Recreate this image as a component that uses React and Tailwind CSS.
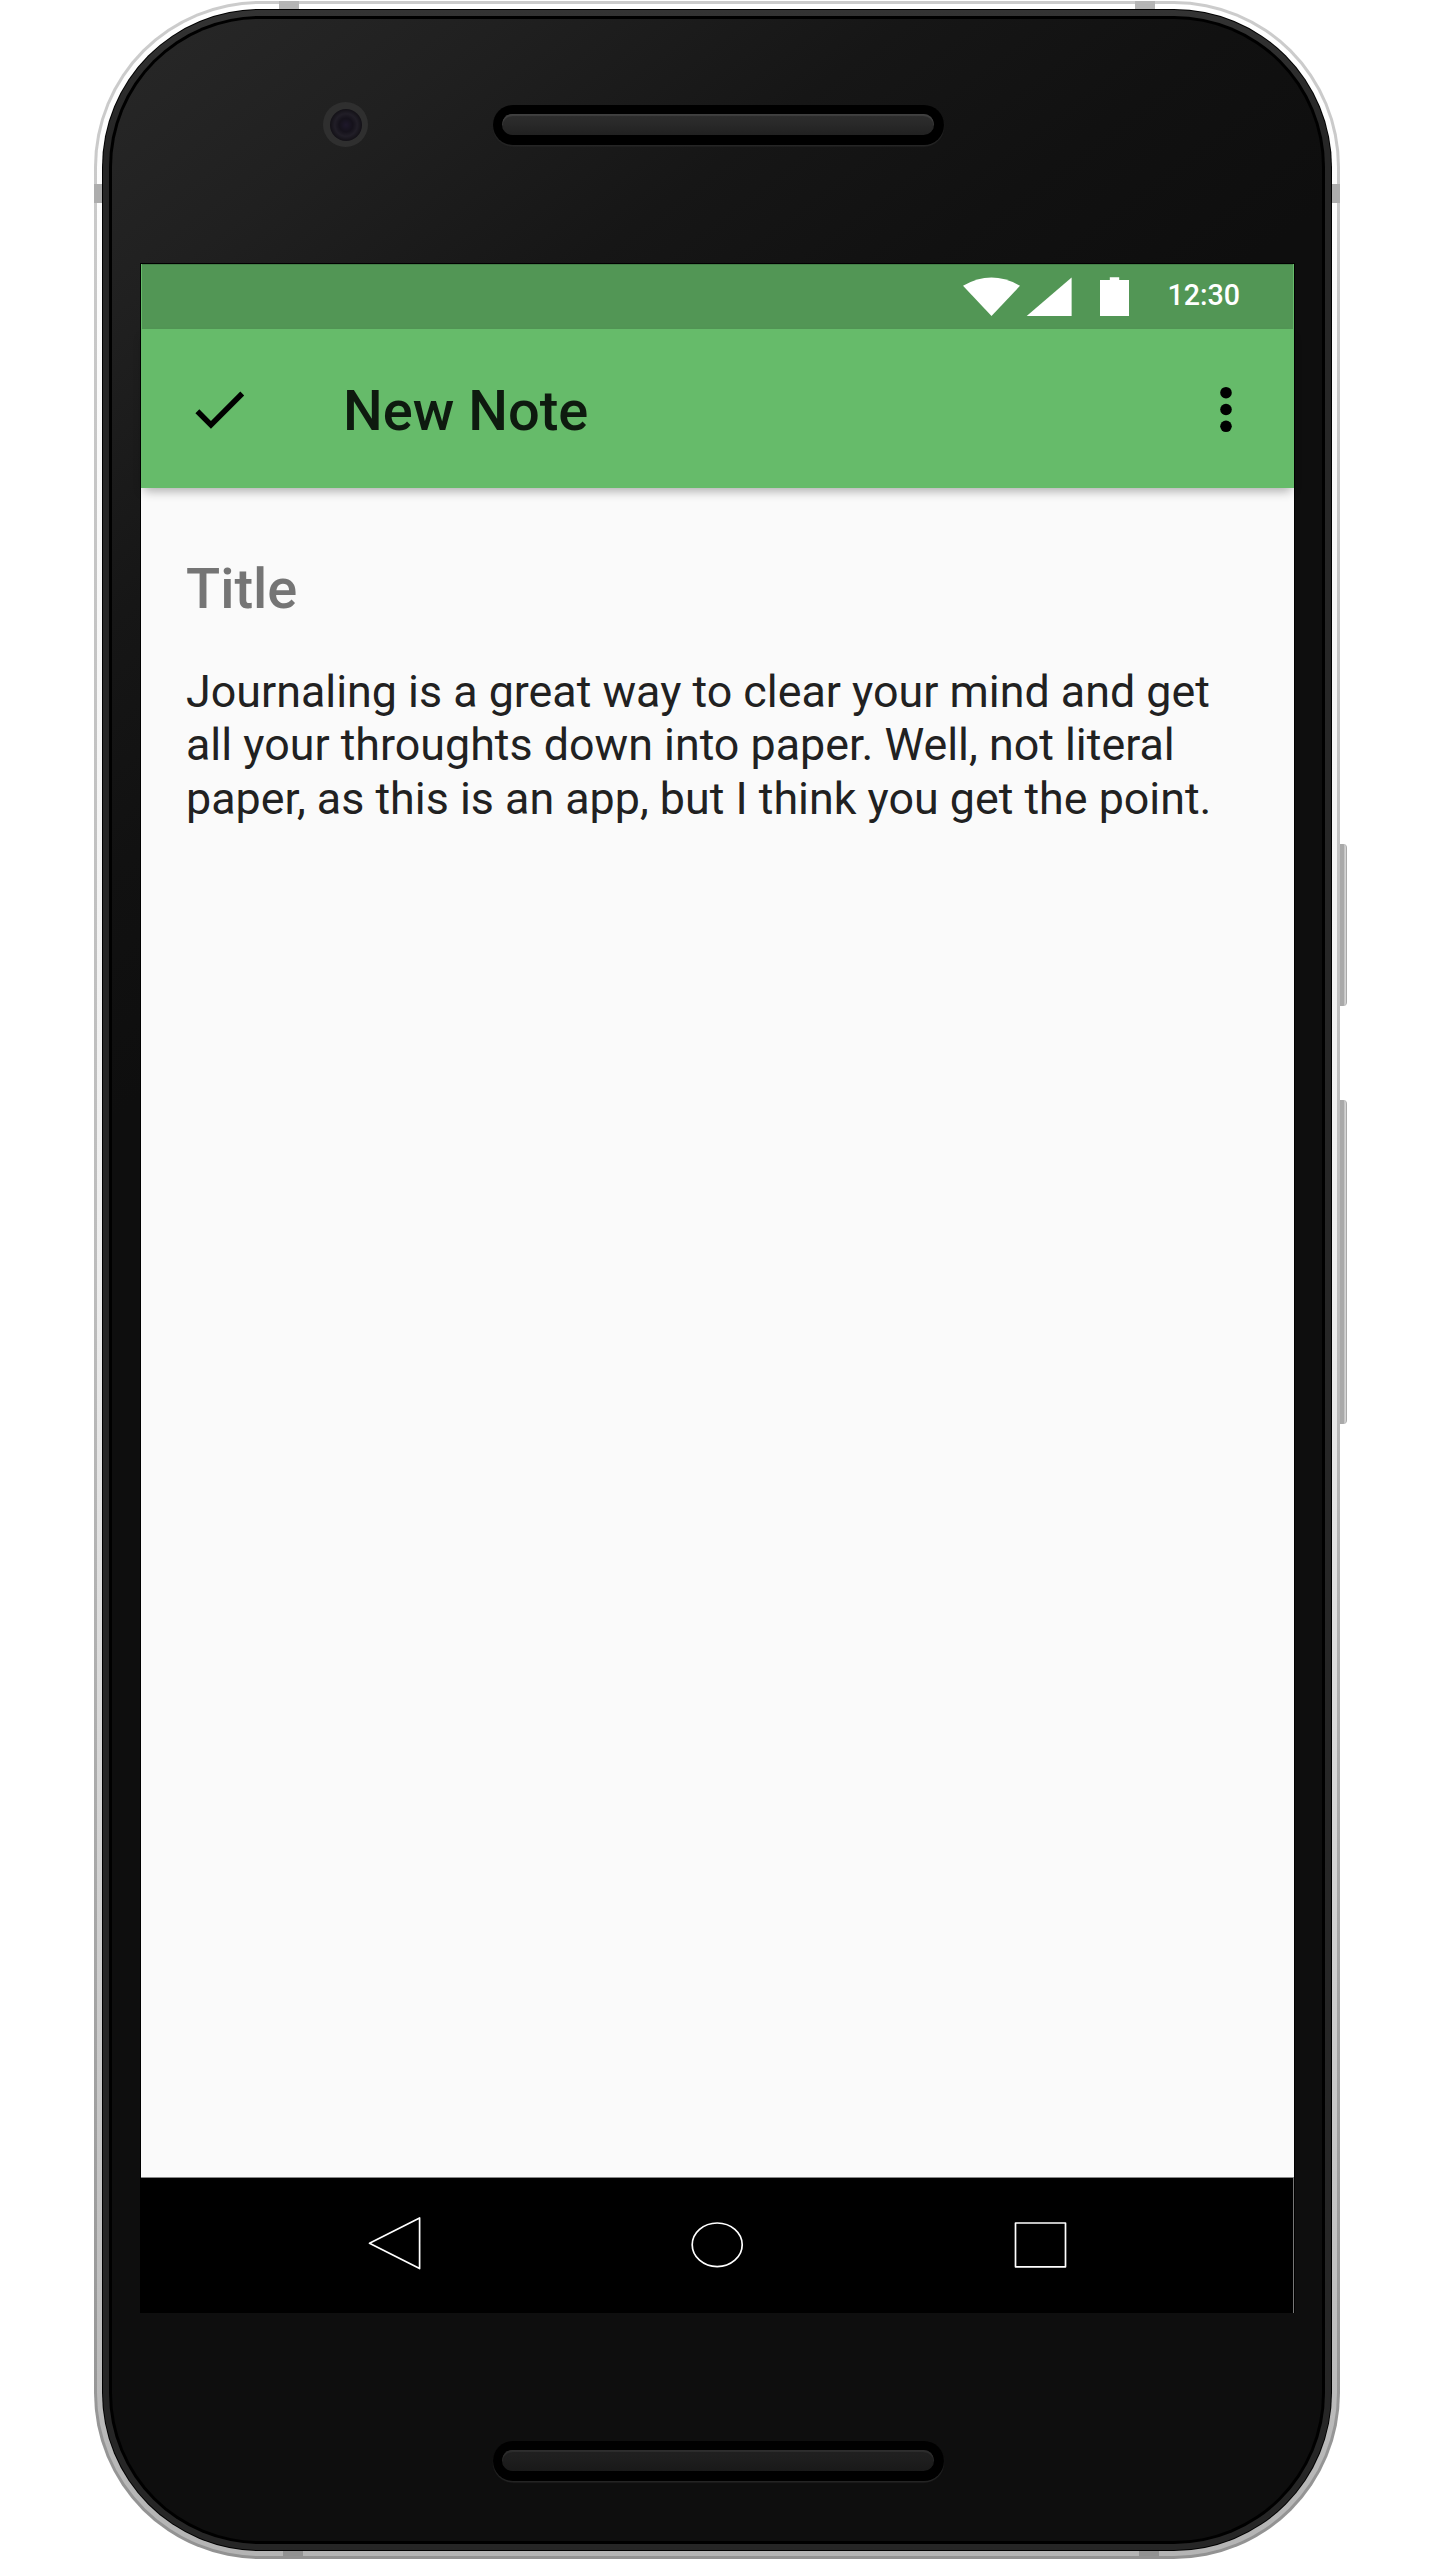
function Speaker({ dim = false }) {
  return (
    <div className="h-[40px] w-[451px] rounded-full bg-black px-[9.5px] pt-[9px] shadow-[0_1.5px_1px_#262626]">
      <div
        className={
          dim
            ? "h-[21px] rounded-full bg-linear-to-b from-[#202020] via-[#1e1e1e] via-45% to-[#191919] shadow-[inset_0_2px_1px_#2e2e2e]"
            : "h-[21px] rounded-full bg-linear-to-b from-[#2d2d2d] via-[#292929] via-45% to-[#212121] shadow-[inset_0_2px_1px_#404040]"
        }
      />
    </div>
  );
}

function StatusBar() {
  return (
    <div className="mx-[1px] flex h-[65px] items-start justify-end border-t border-[#458049] bg-[#529655] pr-[51.5px]">
      <svg className="mt-[12px] h-[40px] w-[168px]" viewBox="962 277 168 40" fill="#fff">
        <path d="M963 285.8 Q991.5 269.2 1020 285.8 L991.5 316 Z" />
        <path d="M1071.6 277.6 V316 H1026.7 Z" />
        <path d="M1109.8 277.3 H1119.2 V280 H1129 V316 H1100 V280 H1109.8 Z" />
      </svg>
      <div className="ml-[38px] mt-[13px] w-[74px] whitespace-nowrap text-[28.6px] font-medium leading-[34px] text-white">12:30</div>
    </div>
  );
}

function AppBar() {
  return (
    <header className="relative flex h-[159px] items-center bg-[#66bb6a] pl-[44.5px] pr-[34px] pt-[2px] shadow-[0_6px_10px_-3px_rgba(0,0,0,0.32)]">
      <svg className="h-[66.5px] w-[66.5px]" viewBox="0 0 24 24">
        <path d="M9 16.2L4.8 12l-1.4 1.4L9 19 21 7l-1.4-1.4L9 16.2z" />
      </svg>
      <h1 className="ml-[91px] mt-[3px] flex-1 text-[56px] font-medium leading-[64px] text-[#0e1a0f]">New Note</h1>
      <svg className="h-[67px] w-[67px]" viewBox="0 0 67 67">
        <circle cx="33" cy="16.7" r="5.8" />
        <circle cx="33" cy="33.5" r="5.8" />
        <circle cx="33" cy="50.3" r="5.8" />
      </svg>
    </header>
  );
}

function NavBar() {
  return (
    <nav className="h-[135px] bg-black">
      <svg className="h-[135px] w-full" viewBox="141 2178 1152 135" fill="none" stroke="#fff" strokeWidth="1.7" strokeLinejoin="round">
        <path d="M369.5 2243.3 L419.6 2218 V2268.6 Z" />
        <ellipse cx="717.2" cy="2244.8" rx="25" ry="21.8" />
        <rect x="1015.5" y="2223" width="50" height="43.8" />
      </svg>
    </nav>
  );
}

export default function App() {
  return (
    <div className="relative h-[2560px] w-[1440px] overflow-hidden bg-white pl-[94px] pt-[1px] font-['Roboto',sans-serif]">
      {/* side keys */}
      <div className="absolute left-[1336px] top-[844px] h-[162px] w-[11px] rounded-r-[4px] border-r border-[#a9a9a9] bg-linear-to-r from-[#a9a9a9] from-75% to-[#d4d4d4] to-90%" />
      <div className="absolute left-[1336px] top-[1100px] h-[324px] w-[11px] rounded-r-[4px] border-r border-[#a9a9a9] bg-linear-to-r from-[#a9a9a9] from-75% to-[#d4d4d4] to-90%" />

      {/* metal rim */}
      <div className="relative h-[2558px] w-[1246px] rounded-[166px] bg-linear-to-b from-[#cccccc] via-[#bcbcbc] via-50% to-[#929292] p-[3px]">
        <div className="h-full rounded-[163px] bg-linear-to-b from-white via-[#eeeeee] via-50% to-[#b4b4b4] p-[5px]">
          <div className="h-full rounded-[158px] bg-black p-[1px]">
            <div className="h-full rounded-[157px] bg-linear-to-b from-[#333333] to-[#262626] to-5% p-[6px]">
              <div className="h-full rounded-[151px] bg-black p-[3px]">
                <div className="flex h-full flex-col rounded-[148px] bg-[linear-gradient(143deg,#282828_0px,#202020_235px,#161616_480px,#111111_680px,#0e0e0e_880px)]">
                  <div className="flex h-[244px] items-start">
                    <div className="ml-[211px] mt-[83px] h-[45px] w-[45px] rounded-full bg-[#2f2f2f] p-[6.5px]">
                      <div className="h-full rounded-full bg-[radial-gradient(circle,#1e182b_0%,#15121b_30%,#211e27_50%,#100e13_75%)]" />
                    </div>
                    <div className="ml-[124.5px] mt-[86px]">
                      <Speaker />
                    </div>
                  </div>

                  <div className="ml-[28px] flex h-[2050px] w-[1155px] flex-col border-x border-t border-black">
                    <div className="flex h-[1914px] flex-col bg-[#66bb6a]">
                      <StatusBar />
                      <AppBar />
                      <main className="flex-1 border-b border-[#8a8a8a] bg-[#fafafa] px-[45px] pt-[69px]">
                        <h2 className="text-[56px] font-medium leading-[64px] text-[#757575]">Title</h2>
                        <p className="mt-[44px] whitespace-nowrap text-[44.8px] leading-[53.3px] text-[#212121]">
                          Journaling is a great way to clear your mind and get
                          <br />
                          all your throughts down into paper. Well, not literal
                          <br />
                          paper, as this is an app, but I think you get the point.
                        </p>
                      </main>
                    </div>
                    <div className="border-r border-[#777777]">
                      <NavBar />
                    </div>
                  </div>

                  <div className="ml-[380.5px] mt-[128px]">
                    <Speaker dim />
                  </div>
                </div>
              </div>
            </div>
          </div>
        </div>

        {/* antenna bands */}
        <div className="absolute left-[185px] top-0 h-[8px] w-[20px] bg-[#b5b5b5]" />
        <div className="absolute left-[1041px] top-0 h-[8px] w-[20px] bg-[#b5b5b5]" />
        <div className="absolute left-0 top-[183px] h-[19px] w-[8px] bg-[#adadad]" />
        <div className="absolute right-0 top-[183px] h-[19px] w-[8px] bg-[#adadad]" />
        <div className="absolute bottom-0 left-[189px] h-[8px] w-[20px] bg-[#929292]" />
        <div className="absolute bottom-0 left-[1045px] h-[8px] w-[20px] bg-[#929292]" />
      </div>
    </div>
  );
}
